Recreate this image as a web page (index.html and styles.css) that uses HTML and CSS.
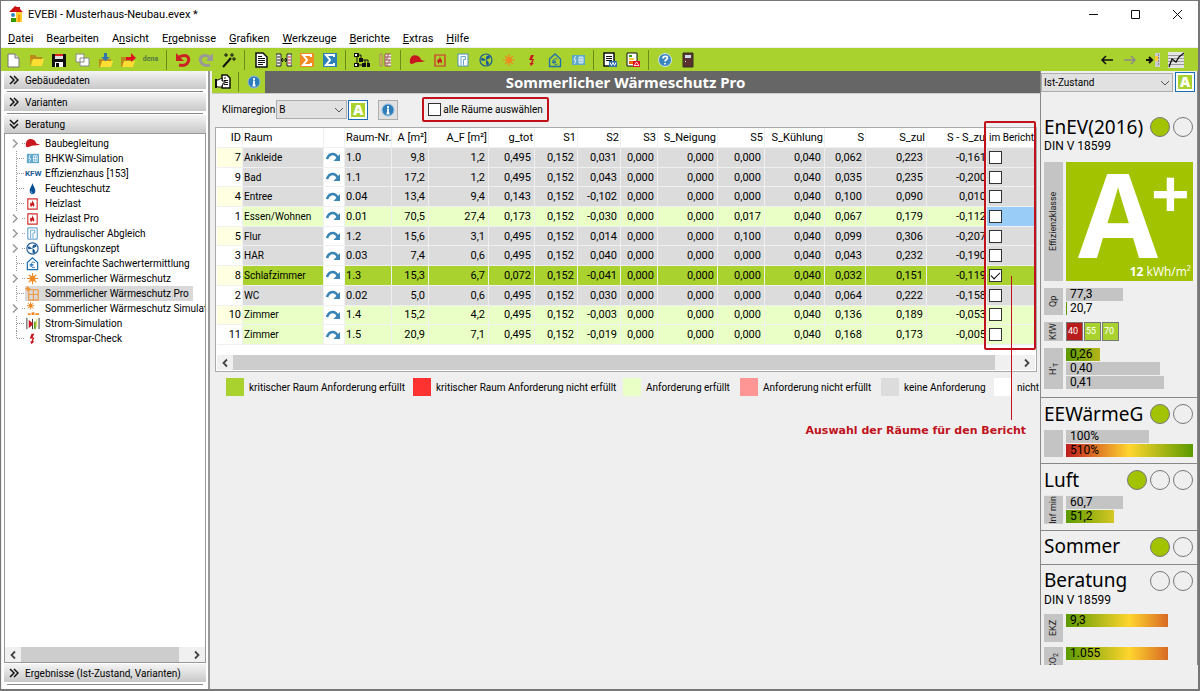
FILE: index.html
```html
<!DOCTYPE html>
<html lang="de">
<head>
    <meta charset="UTF-8">
    <title>EVEBI - Musterhaus-Neubau.evex</title>
    <link rel="stylesheet" href="styles.css">
</head>
<body>
<svg class="sprite" aria-hidden="true">
    <symbol id="i-house" viewBox="0 0 16 16"><path d="M2 6h12v10H2z" fill="#fff"/><path d="M8 6h6v10H8z" fill="#fc3"/><path d="M10 9h2v7h-2z" fill="#f90"/><path d="M3 12h5v4H3z" fill="#390"/><circle cx="5" cy="9" r="2" fill="#38b"/><path d="M1 6l6-6 2 1h3v2l3 3z" fill="#c11"/></symbol>
    <symbol id="i-new" viewBox="0 0 16 16"><path d="M3 2h7l4 4v9H3z" fill="#fff" stroke="#777"/><path d="M10 2v4h4" fill="#ddd" stroke="#777"/></symbol>
    <symbol id="i-open" viewBox="0 0 16 16"><path d="M2 3h5l2 2h5v3H2z" fill="#b98a1c"/><path d="M3 14l2-7h11l-2 7z" fill="#fd3"/><path d="M2 14V6l2 1z" fill="#db8f10"/></symbol>
    <symbol id="i-save" viewBox="0 0 16 16"><path d="M1 2h14v13H1z" fill="#111"/><path d="M4 2h8v5H4z" fill="#ddd"/><path d="M4 2h8v2H4z" fill="#d22"/><path d="M4 10h8v5H4z" fill="#fff"/><path d="M5 11h3v4H5z" fill="#111"/></symbol>
    <symbol id="i-copy" viewBox="0 0 16 16"><path d="M2 2h8v8H2zM6 6h9v8H6z" fill="#fff" stroke="#888"/></symbol>
    <symbol id="i-import" viewBox="0 0 16 16"><path d="M2 7h12v8H2z" fill="#b98a1c"/><path d="M3 15l2-6h11l-2 6z" fill="#fd3"/><path d="M7 1h3v4h3l-4.500 4L4 5h3z" fill="#37a"/></symbol>
    <symbol id="i-export" viewBox="0 0 16 16"><path d="M1 5h12v10H1z" fill="#b98a1c"/><path d="M2 15l2-6h11l-2 6z" fill="#fd3"/><path d="M6 8V5h5V1l5 5-5 4V8z" fill="#d12"/></symbol>
    <symbol id="i-undo" viewBox="0 0 16 16"><path d="M4 5c8-4 11 1 9 5-1 3-5 4-9 3" fill="none" stroke="#c22" stroke-width="3"/><path d="M1 1v8h8z" fill="#c22"/></symbol>
    <symbol id="i-redo" viewBox="0 0 16 16"><path d="M12 5C4 1 1 6 3 10c1 3 5 4 9 3" fill="none" stroke="#999" stroke-width="3"/><path d="M15 1v8H8z" fill="#999"/></symbol>
    <symbol id="i-wand" viewBox="0 0 16 16"><path d="M2 15L10 6" stroke="#111" stroke-width="2"/><path d="M5 1v4M3 3h4M11 1v4M9 3h4M13 5v4M11 7h4" stroke="#111"/></symbol>
    <symbol id="i-doc" viewBox="0 0 16 16"><path d="M3 1h7l4 4v10H3z" fill="#fff" stroke="#111" stroke-width="1.500"/><path d="M5 4.500h4M5 6.500h7M5 8.500h7M5 10.500h7M5 12.500h5" stroke="#111"/></symbol>
    <symbol id="i-compare" viewBox="0 0 16 16"><path d="M0 2h5v12H0V2M11 2h5v12h-5z" fill="#eee" stroke="#222"/><path d="M1 5h3M1 8h3M1 11h3" stroke="#222"/><path d="M12 5h3M12 8h3M12 11h3" stroke="#c22"/><path d="M5 8h6M7 6L5 8l2 2M9 6l2 2-2 2" fill="none" stroke="#111"/></symbol>
    <symbol id="i-sum" viewBox="0 0 16 16"><path d="M1 1h14v14H1z"/><path d="M12 5V3H4l4 5-4 5h8v-2" fill="none" stroke="#fff" stroke-width="2"/></symbol>
    <symbol id="i-tree" viewBox="0 0 16 16"><path d="M3 3h4v5h4v5M3 3v10h5M11 8h3v4" fill="none" stroke="#111"/><path d="M0 1h5v4H0zM5 6h4v4H5zM0 11h5v4H0zM8 11h4v4H8zM13 11h3v4h-3z" fill="#111"/><path d="M1 2h2v2H1zM1 12h2v2H1z" fill="#fff"/></symbol>
    <symbol id="i-wall" viewBox="0 0 16 16"><path d="M3 2h2v12H3z" fill="#fc5" stroke="#986"/><path d="M8 2h6v12H8z" fill="#f4f0ee"/><path d="M8 2v12M8 2h6M8 5h6M8 8h6M8 11h6M8 14h6M11 2v3M10 5v3M12 8v3M10 11v3" stroke="#955"/></symbol>
    <symbol id="i-helmet" viewBox="0 0 16 16"><path d="M1 11C0 4 5 2 9 4c2 1 3 3 3 4l4 1c-2 1-5 1-7 1-3 0-4 2-7 2z" fill="#c8171e"/></symbol>
    <symbol id="i-heat" viewBox="0 0 16 16"><path d="M3 3h10v11H3z" fill="none" stroke="#d22c2c" stroke-width="1.200"/><path d="M8 4c0 3 2 3 2 6l-1 2c0-1 0-2-1-2s-1 1-1 2c-2-1-2-4-1-5l1 1z" fill="#c8171e"/></symbol>
    <symbol id="i-hydro" viewBox="0 0 16 16"><path d="M3 2h10v12H3z" fill="#fff" stroke="#4a90c0"/><path d="M6 4v9M6.500 4.500h4v3h-2V13" fill="none" stroke="#6aa6cf"/></symbol>
    <symbol id="i-fan" viewBox="0 0 16 16"><circle cx="8" cy="8" r="6" fill="none" stroke="#1d5c96" stroke-width="1.200"/><path d="M8 8C2 11 2 5 5 6zM8 8c-1-6 5-5 4-2zM8 8c6 3 1 7 0 4z" fill="#1d5c96"/></symbol>
    <symbol id="i-sun" viewBox="0 0 16 16"><circle cx="8" cy="8" r="3" fill="#f08a24"/><path d="M8 2v12M2 8h12M4 4l8 8M12 4l-8 8" stroke="#f08a24" stroke-width="1.200"/></symbol>
    <symbol id="i-bolt" viewBox="0 0 16 16"><path d="M7 3L5 8h3l-1 3H5.500L7 14l3-3H8.500L10 7H8l2-4z" fill="#c8171e"/></symbol>
    <symbol id="i-value" viewBox="0 0 16 16"><path d="M2.500 7L8 2l5.500 5v7.500h-11z" fill="none" stroke="#1f6fae" stroke-width="1.300"/><path d="M10.500 7C8 5.500 6.500 7.500 6.500 9.500s1.500 4 4 2.500M5 9h4M5 10.500h4" fill="none" stroke="#1f6fae"/></symbol>
    <symbol id="i-bhkw" viewBox="0 0 16 16"><path d="M2 3h13v10H2z" fill="#5fa8ca"/><path d="M5.500 4L4 8h2l-1.500 4M9 5h4v6H9V5M9 8h4M11 5v6" fill="none" stroke="#fff" stroke-width=".8"/></symbol>
    <symbol id="i-word" viewBox="0 0 16 16"><path d="M2 1h10v13H2z" fill="#fff" stroke="#111" stroke-width="1.500"/><path d="M4 4.500h6M4 6.500h6M4 8.500h6" stroke="#111"/><path d="M7 9h8v6H7z" fill="#2c6ca8"/><path d="M8 10.500l1.500 3 1.500-3 1.500 3 1.500-3" fill="none" stroke="#fff"/></symbol>
    <symbol id="i-pdf" viewBox="0 0 16 16"><path d="M2 1h10v13H2z" fill="#fff" stroke="#111"/><path d="M4 3h3v2H4z" fill="#390"/><path d="M4 6h5v2H4z" fill="#fc3"/><path d="M4 9h6v3H4z" fill="#e60"/><path d="M8 9h7v6H8z" fill="#d12"/><path d="M9 14l2.500-4 2.500 3.500H9" fill="none" stroke="#fff" stroke-width=".8"/></symbol>
    <symbol id="i-help" viewBox="0 0 16 16"><circle cx="8" cy="8" r="6.500" fill="#3a85bd" stroke="#d5e6f2"/><path d="M6 6.500c0-3 4.500-2.500 4.500-.5C10.500 7.500 8 7.500 8 9.500M8 11v1.500" fill="none" stroke="#fff" stroke-width="1.700"/></symbol>
    <symbol id="i-info" viewBox="0 0 16 16"><circle cx="8" cy="8" r="6" fill="#2f7db8" stroke="#8dbbe0"/><path d="M7 7.500h1v4M6.500 11.500h3M8 4v2" fill="none" stroke="#fff" stroke-width="1.800"/></symbol>
    <symbol id="i-door" viewBox="0 0 16 16"><path d="M3 1h10v14H3z" fill="#5a3030" stroke="#332"/><path d="M5 3h6v3H5z" fill="#cde"/><path d="M5 9h1v1H5z" fill="#fff"/></symbol>
    <symbol id="i-left" viewBox="0 0 16 16"><path d="M14 8H3M7 4L3 8l4 4" fill="none" stroke="#111" stroke-width="1.500"/></symbol>
    <symbol id="i-right" viewBox="0 0 16 16"><path d="M2 8h11M9 4l4 4-4 4" fill="none" stroke="#8a8a8a" stroke-width="1.500"/></symbol>
    <symbol id="i-dock" viewBox="0 0 16 16"><path d="M1 8h5M4 5l3 3-3 3" fill="none" stroke="#111" stroke-width="2"/><path d="M10 1h5v14h-5z" fill="#ccc"/><path d="M10 4h3v5h-3z" fill="#fc3"/><path d="M13.500 2v12" stroke="#888" stroke-dasharray="2 1"/></symbol>
    <symbol id="i-chart" viewBox="0 0 16 16"><path d="M0 0h16v16H0z" fill="#e4e4e4"/><path d="M0 3.500h16M0 6.500h16M0 9.500h16M0 12.500h16" stroke="#999"/><path d="M1 15L4 7l4 3 3-5 5-4" fill="none" stroke="#111" stroke-width="1.300"/></symbol>
    <symbol id="i-hand" viewBox="0 0 16 16"><path d="M7 1h5l3 3v10H7z" fill="#fff" stroke="#111" stroke-width="1.500"/><path d="M9 4h2M9 6.500h4M9 8.500h4M9 10.500h4" stroke="#111"/><path d="M1 6h2l4-2v3h3v2H8v2H7v2H3l-2-1z" fill="#fff" stroke="#111"/><path d="M0 5h2v9H0z" fill="#111"/></symbol>
    <symbol id="i-drop" viewBox="0 0 16 16"><path d="M8 2c1 4 3 5 3 9 0 4-6 4-6 0 0-4 2-5 3-9z" fill="#0b4f94"/><path d="M6.500 11c0 1 .5 2 1.500 2" fill="none" stroke="#9cf"/></symbol>
    <symbol id="i-window" viewBox="0 0 16 16"><path d="M4 4h10v11H4zM9 4v11M4 9h10" fill="none" stroke="#f0963c" stroke-width="1.200"/><circle cx="3" cy="3" r="2" fill="#f0963c"/><path d="M3 0v6M0 3h6" stroke="#f0963c"/></symbol>
    <symbol id="i-sunbars" viewBox="0 0 16 16"><circle cx="6" cy="5" r="2" fill="#f08a24"/><path d="M6 1v8M2 5h8M3 2l6 6M9 2L3 8" stroke="#f08a24"/><path d="M3 13h3v2H3zM7 12h3v3H7zM11 13h4v2h-4z" fill="#f08a24"/></symbol>
    <symbol id="i-power" viewBox="0 0 16 16"><path d="M2 2v12M8 3v11M15 2v12" stroke="#333"/><path d="M4 4l5 4.500L4 13z" fill="#c8171e"/><path d="M10.500 6v8" stroke="#6a2" stroke-width="2"/><path d="M12.500 3v9" stroke="#cd3"/></symbol>
    <symbol id="i-jump" viewBox="0 0 16 16"><path d="M1 10c2-6 8-7 11-1" fill="none" stroke="#3a85b5" stroke-width="2.600"/><path d="M14 5v7H7.500z" fill="#3a85b5"/></symbol>
    <symbol id="i-more" viewBox="0 0 10 10"><path d="M1 1l4 4-4 4M5 1l4 4-4 4" fill="none" stroke="#111" stroke-width="1.500"/></symbol>
    <symbol id="i-down" viewBox="0 0 10 10"><path d="M1 3l4 4 4-4" fill="none" stroke="#555"/></symbol>
    <symbol id="i-scroll" viewBox="0 0 10 10"><path d="M3 1.500L6.500 5 3 8.500" fill="none" stroke="#444" stroke-width="1.800"/></symbol>
    <symbol id="b-leaf" viewBox="0 0 20 15"><path d="M11.500 0v15" stroke="#999" stroke-dasharray="1 1"/><path d="M12 7.500h8" stroke="#999" stroke-dasharray="1 1"/></symbol>
    <symbol id="b-last" viewBox="0 0 20 15"><path d="M11.500 0v8" stroke="#999" stroke-dasharray="1 1"/><path d="M12 7.500h8" stroke="#999" stroke-dasharray="1 1"/></symbol>
    <symbol id="b-node" viewBox="0 0 20 15"><path d="M8 3.500l4 4-4 4" fill="none" stroke="#999" stroke-width="1.500"/><path d="M17 7.500h3" stroke="#999" stroke-dasharray="1 1"/></symbol>
</svg>

<div class="window">
    <header class="titlebar">
        <svg class="icon"><use href="#i-house"/></svg>
        <span class="caption">EVEBI - Musterhaus-Neubau.evex *</span>
        <button class="winbtn" aria-label="Minimieren"><svg viewBox="0 0 11 11"><path d="M1 5.500h9" stroke="#111"/></svg></button>
        <button class="winbtn" aria-label="Maximieren"><svg viewBox="0 0 11 11"><path d="M1.500 1.500h8v8h-8z" fill="none" stroke="#111"/></svg></button>
        <button class="winbtn" aria-label="Schließen"><svg viewBox="0 0 11 11"><path d="M1 1l9 9M10 1l-9 9" stroke="#111"/></svg></button>
    </header>
    <nav class="menubar">
        <a href="#"><u>D</u>atei</a>
        <a href="#">Be<u>a</u>rbeiten</a>
        <a href="#">A<u>n</u>sicht</a>
        <a href="#">E<u>r</u>gebnisse</a>
        <a href="#"><u>G</u>rafiken</a>
        <a href="#"><u>W</u>erkzeuge</a>
        <a href="#"><u>B</u>erichte</a>
        <a href="#"><u>E</u>xtras</a>
        <a href="#"><u>H</u>ilfe</a>
    </nav>
    <div class="toolbar">
        <button aria-label="Neu"><svg class="icon"><use href="#i-new"/></svg></button>
        <button aria-label="Öffnen"><svg class="icon"><use href="#i-open"/></svg></button>
        <button aria-label="Speichern"><svg class="icon"><use href="#i-save"/></svg></button>
        <button aria-label="Kopieren"><svg class="icon"><use href="#i-copy"/></svg></button>
        <button aria-label="Import"><svg class="icon"><use href="#i-import"/></svg></button>
        <button aria-label="Export"><svg class="icon"><use href="#i-export"/></svg></button>
        <button class="dena">dena</button>
        <span class="sep"></span>
        <button aria-label="Rückgängig"><svg class="icon"><use href="#i-undo"/></svg></button>
        <button aria-label="Wiederholen"><svg class="icon"><use href="#i-redo"/></svg></button>
        <button aria-label="Assistent"><svg class="icon"><use href="#i-wand"/></svg></button>
        <span class="sep"></span>
        <button aria-label="Dokument"><svg class="icon"><use href="#i-doc"/></svg></button>
        <button aria-label="Vergleich"><svg class="icon"><use href="#i-compare"/></svg></button>
        <button aria-label="Summe"><svg class="icon orange"><use href="#i-sum"/></svg></button>
        <button aria-label="Summe Varianten"><svg class="icon blue"><use href="#i-sum"/></svg></button>
        <span class="sep"></span>
        <button aria-label="Anlagenbaum"><svg class="icon"><use href="#i-tree"/></svg></button>
        <button aria-label="Bauteile"><svg class="icon"><use href="#i-wall"/></svg></button>
        <span class="sep"></span>
        <button aria-label="Baubegleitung"><svg class="icon"><use href="#i-helmet"/></svg></button>
        <button aria-label="Heizlast"><svg class="icon"><use href="#i-heat"/></svg></button>
        <button aria-label="Hydraulischer Abgleich"><svg class="icon"><use href="#i-hydro"/></svg></button>
        <button aria-label="Lüftungskonzept"><svg class="icon"><use href="#i-fan"/></svg></button>
        <button aria-label="Wärmeschutz"><svg class="icon"><use href="#i-sun"/></svg></button>
        <button aria-label="Stromspar-Check"><svg class="icon"><use href="#i-bolt"/></svg></button>
        <button aria-label="Sachwert"><svg class="icon"><use href="#i-value"/></svg></button>
        <button aria-label="BHKW"><svg class="icon"><use href="#i-bhkw"/></svg></button>
        <span class="sep"></span>
        <button aria-label="Word-Bericht"><svg class="icon"><use href="#i-word"/></svg></button>
        <button aria-label="PDF-Bericht"><svg class="icon"><use href="#i-pdf"/></svg></button>
        <span class="sep"></span>
        <button aria-label="Hilfe"><svg class="icon"><use href="#i-help"/></svg></button>
        <button aria-label="Beenden"><svg class="icon"><use href="#i-door"/></svg></button>
        <span class="spacer"></span>
        <button aria-label="Zurück"><svg class="icon"><use href="#i-left"/></svg></button>
        <button aria-label="Vor"><svg class="icon"><use href="#i-right"/></svg></button>
        <button aria-label="Andocken"><svg class="icon"><use href="#i-dock"/></svg></button>
        <button aria-label="Diagramm"><svg class="icon"><use href="#i-chart"/></svg></button>
    </div>

    <div class="body">
        <aside class="sidebar">
            <button class="fold"><svg><use href="#i-more"/></svg>Gebäudedaten</button>
            <hr>
            <button class="fold"><svg><use href="#i-more"/></svg>Varianten</button>
            <hr>
            <button class="fold open"><svg><use href="#i-more"/></svg>Beratung</button>
            <div class="treebox">
                <ul class="tree">
                    <li><svg class="branch"><use href="#b-node"/></svg><a href="#"><svg class="icon"><use href="#i-helmet"/></svg>Baubegleitung</a></li>
                    <li><svg class="branch"><use href="#b-leaf"/></svg><a href="#"><svg class="icon"><use href="#i-bhkw"/></svg>BHKW-Simulation</a></li>
                    <li><svg class="branch"><use href="#b-leaf"/></svg><a href="#"><span class="kfw-logo">KFW</span>Effizienzhaus [153]</a></li>
                    <li><svg class="branch"><use href="#b-leaf"/></svg><a href="#"><svg class="icon"><use href="#i-drop"/></svg>Feuchteschutz</a></li>
                    <li><svg class="branch"><use href="#b-leaf"/></svg><a href="#"><svg class="icon"><use href="#i-heat"/></svg>Heizlast</a></li>
                    <li><svg class="branch"><use href="#b-node"/></svg><a href="#"><svg class="icon"><use href="#i-heat"/></svg>Heizlast Pro</a></li>
                    <li><svg class="branch"><use href="#b-node"/></svg><a href="#"><svg class="icon"><use href="#i-hydro"/></svg>hydraulischer Abgleich</a></li>
                    <li><svg class="branch"><use href="#b-node"/></svg><a href="#"><svg class="icon"><use href="#i-fan"/></svg>Lüftungskonzept</a></li>
                    <li><svg class="branch"><use href="#b-leaf"/></svg><a href="#"><svg class="icon"><use href="#i-value"/></svg>vereinfachte Sachwertermittlung</a></li>
                    <li><svg class="branch"><use href="#b-node"/></svg><a href="#"><svg class="icon"><use href="#i-sun"/></svg>Sommerlicher Wärmeschutz</a></li>
                    <li><svg class="branch"><use href="#b-leaf"/></svg><a href="#" class="selected"><svg class="icon"><use href="#i-window"/></svg>Sommerlicher Wärmeschutz Pro</a></li>
                    <li><svg class="branch"><use href="#b-node"/></svg><a href="#"><svg class="icon"><use href="#i-sunbars"/></svg>Sommerlicher Wärmeschutz Simulation</a></li>
                    <li><svg class="branch"><use href="#b-leaf"/></svg><a href="#"><svg class="icon"><use href="#i-power"/></svg>Strom-Simulation</a></li>
                    <li><svg class="branch"><use href="#b-last"/></svg><a href="#"><svg class="icon"><use href="#i-bolt"/></svg>Stromspar-Check</a></li>
                </ul>
                <div class="hscroll">
                    <svg class="back"><use href="#i-scroll"/></svg>
                    <div class="track"><div class="thumb" style="width: 94%"></div></div>
                    <svg><use href="#i-scroll"/></svg>
                </div>
            </div>
            <button class="fold"><svg><use href="#i-more"/></svg>Ergebnisse (Ist-Zustand, Varianten)</button>
            <hr>
        </aside>

        <main class="content">
            <div class="pagehead">
                <button aria-label="Bericht"><svg class="icon"><use href="#i-hand"/></svg></button>
                <span class="sep"></span>
                <button aria-label="Info"><svg class="icon"><use href="#i-info"/></svg></button>
                <h1>Sommerlicher Wärmeschutz Pro</h1>
            </div>
            <div class="filter">
                <label for="region">Klimaregion</label>
                <span class="combo region"><select id="region"><option>B</option></select><svg><use href="#i-down"/></svg></span>
                <button class="auto">A</button>
                <button class="infobtn" aria-label="Info"><svg class="icon"><use href="#i-info"/></svg></button>
                <label class="all"><input type="checkbox">alle Räume auswählen</label>
            </div>

            <div class="grid">
                <table>
                    <colgroup>
                        <col class="w26"><col class="w81"><col class="w21"><col class="w47"><col class="w37"><col class="w60"><col class="w46"><col class="w43"><col class="w43"><col class="w37"><col class="w60"><col class="w47"><col class="w60"><col class="w41"><col class="w61"><col class="w60"><col class="w49">
                    </colgroup>
                    <thead>
                    <tr><th>ID</th><th class="l">Raum</th><th></th><th class="l">Raum-Nr.</th><th>A [m²]</th><th>A_F [m²]</th><th>g_tot</th><th>S1</th><th>S2</th><th>S3</th><th>S_Neigung</th><th>S5</th><th>S_Kühlung</th><th>S</th><th>S_zul</th><th class="cut">S - S_zul</th><th class="l">im Bericht</th></tr>
                    </thead>
                    <tbody>
                    <tr class="none"><td>7</td><td class="l">Ankleide</td><td class="go"><svg class="icon"><use href="#i-jump"/></svg></td><td class="l">1.0</td><td>9,8</td><td>1,2</td><td>0,495</td><td>0,152</td><td>0,031</td><td>0,000</td><td>0,000</td><td>0,000</td><td>0,040</td><td>0,062</td><td>0,223</td><td class="end">-0,161</td><td class="l"><input type="checkbox" aria-label="Ankleide"></td></tr>
                    <tr class="none"><td>9</td><td class="l">Bad</td><td class="go"><svg class="icon"><use href="#i-jump"/></svg></td><td class="l">1.1</td><td>17,2</td><td>1,2</td><td>0,495</td><td>0,152</td><td>0,043</td><td>0,000</td><td>0,000</td><td>0,000</td><td>0,040</td><td>0,035</td><td>0,235</td><td class="end">-0,200</td><td class="l"><input type="checkbox" aria-label="Bad"></td></tr>
                    <tr class="none"><td>4</td><td class="l">Entree</td><td class="go"><svg class="icon"><use href="#i-jump"/></svg></td><td class="l">0.04</td><td>13,4</td><td>9,4</td><td>0,143</td><td>0,152</td><td>-0,102</td><td>0,000</td><td>0,000</td><td>0,000</td><td>0,040</td><td>0,100</td><td>0,090</td><td class="end">0,010</td><td class="l"><input type="checkbox" aria-label="Entree"></td></tr>
                    <tr class="ok"><td>1</td><td class="l">Essen/Wohnen</td><td class="go"><svg class="icon"><use href="#i-jump"/></svg></td><td class="l">0.01</td><td>70,5</td><td>27,4</td><td>0,173</td><td>0,152</td><td>-0,030</td><td>0,000</td><td>0,000</td><td>0,017</td><td>0,040</td><td>0,067</td><td>0,179</td><td class="end">-0,112</td><td class="l focus"><input type="checkbox" aria-label="Essen/Wohnen"></td></tr>
                    <tr class="none"><td>5</td><td class="l">Flur</td><td class="go"><svg class="icon"><use href="#i-jump"/></svg></td><td class="l">1.2</td><td>15,6</td><td>3,1</td><td>0,495</td><td>0,152</td><td>0,014</td><td>0,000</td><td>0,000</td><td>0,100</td><td>0,040</td><td>0,099</td><td>0,306</td><td class="end">-0,207</td><td class="l"><input type="checkbox" aria-label="Flur"></td></tr>
                    <tr class="none"><td>3</td><td class="l">HAR</td><td class="go"><svg class="icon"><use href="#i-jump"/></svg></td><td class="l">0.03</td><td>7,4</td><td>0,6</td><td>0,495</td><td>0,152</td><td>0,040</td><td>0,000</td><td>0,000</td><td>0,000</td><td>0,040</td><td>0,043</td><td>0,232</td><td class="end">-0,190</td><td class="l"><input type="checkbox" aria-label="HAR"></td></tr>
                    <tr class="critical"><td>8</td><td class="l">Schlafzimmer</td><td class="go"><svg class="icon"><use href="#i-jump"/></svg></td><td class="l">1.3</td><td>15,3</td><td>6,7</td><td>0,072</td><td>0,152</td><td>-0,041</td><td>0,000</td><td>0,000</td><td>0,000</td><td>0,040</td><td>0,032</td><td>0,151</td><td class="end">-0,119</td><td class="l"><input type="checkbox" aria-label="Schlafzimmer" checked></td></tr>
                    <tr class="none"><td>2</td><td class="l">WC</td><td class="go"><svg class="icon"><use href="#i-jump"/></svg></td><td class="l">0.02</td><td>5,0</td><td>0,6</td><td>0,495</td><td>0,152</td><td>0,030</td><td>0,000</td><td>0,000</td><td>0,000</td><td>0,040</td><td>0,064</td><td>0,222</td><td class="end">-0,158</td><td class="l"><input type="checkbox" aria-label="WC"></td></tr>
                    <tr class="ok"><td>10</td><td class="l">Zimmer</td><td class="go"><svg class="icon"><use href="#i-jump"/></svg></td><td class="l">1.4</td><td>15,2</td><td>4,2</td><td>0,495</td><td>0,152</td><td>-0,003</td><td>0,000</td><td>0,000</td><td>0,000</td><td>0,040</td><td>0,136</td><td>0,189</td><td class="end">-0,053</td><td class="l"><input type="checkbox" aria-label="Zimmer 1.4"></td></tr>
                    <tr class="ok"><td>11</td><td class="l">Zimmer</td><td class="go"><svg class="icon"><use href="#i-jump"/></svg></td><td class="l">1.5</td><td>20,9</td><td>7,1</td><td>0,495</td><td>0,152</td><td>-0,019</td><td>0,000</td><td>0,000</td><td>0,000</td><td>0,040</td><td>0,168</td><td>0,173</td><td class="end">-0,005</td><td class="l"><input type="checkbox" aria-label="Zimmer 1.5"></td></tr>
                    </tbody>
                </table>
                <div class="hscroll">
                    <svg class="back"><use href="#i-scroll"/></svg>
                    <div class="track"><div class="thumb" style="width: 97%"></div></div>
                    <svg><use href="#i-scroll"/></svg>
                </div>
                <!-- red markers over the report column -->
                <div class="mark"></div>
                <div class="pointer"></div>
                <p class="note">Auswahl der Räume für den Bericht</p>
            </div>

            <ul class="legend">
                <li><i class="critical"></i>kritischer Raum Anforderung erfüllt</li>
                <li><i class="fail"></i>kritischer Raum Anforderung nicht erfüllt</li>
                <li><i class="ok"></i>Anforderung erfüllt</li>
                <li><i class="notok"></i>Anforderung nicht erfüllt</li>
                <li><i class="none"></i>keine Anforderung</li>
                <li><i class="blank"></i>nicht</li>
            </ul>
        </main>

        <aside class="rating">
            <div class="state">
                <span class="combo"><select aria-label="Zustand"><option>Ist-Zustand</option></select><svg><use href="#i-down"/></svg></span>
                <button class="auto">A</button>
            </div>
            <section class="enev">
                <h2>EnEV(2016)<b class="lamp on"></b><b class="lamp"></b></h2>
                <p>DIN V 18599</p>
                <div class="row">
                    <span class="side">Effizienzklasse</span>
                    <div class="klasse">
                        <span class="letter">A</span><span class="plus">+</span>
                        <span class="value"><b>12</b> kWh/m²</span>
                    </div>
                </div>
                <div class="row">
                    <span class="side">Qp</span>
                    <div class="bars">
                        <div class="bar" style="width: 45%">77,3</div>
                        <div class="bar tiny">20,7</div>
                    </div>
                </div>
                <div class="row">
                    <span class="side">KfW</span>
                    <div class="kfw"><span class="bad">40</span><span>55</span><span>70</span></div>
                </div>
                <div class="row">
                    <span class="side"><span>H'<sub>T</sub></span></span>
                    <div class="bars">
                        <div class="bar green" style="width: 27%">0,26</div>
                        <div class="bar" style="width: 74%">0,40</div>
                        <div class="bar" style="width: 77%">0,41</div>
                    </div>
                </div>
            </section>
            <section>
                <h2>EEWärmeG<b class="lamp on"></b><b class="lamp"></b></h2>
                <div class="row">
                    <span class="side"></span>
                    <div class="bars">
                        <div class="bar" style="width: 65%">100%</div>
                        <div class="bar redgreen">510%</div>
                    </div>
                </div>
            </section>
            <section>
                <h2>Luft<b class="lamp on"></b><b class="lamp"></b><b class="lamp"></b></h2>
                <div class="row">
                    <span class="side">Inf min</span>
                    <div class="bars">
                        <div class="bar" style="width: 45%">60,7</div>
                        <div class="bar greenyellow" style="width: 38%">51,2</div>
                    </div>
                </div>
            </section>
            <section>
                <h2>Sommer<b class="lamp on"></b><b class="lamp"></b></h2>
            </section>
            <section class="advice">
                <h2>Beratung<b class="lamp"></b><b class="lamp"></b></h2>
                <p>DIN V 18599</p>
                <div class="row">
                    <span class="side">EKZ</span>
                    <div class="bars">
                        <div class="bar greenred" style="width: 80%">9,3</div>
                    </div>
                </div>
                <div class="row">
                    <span class="side"><span>CO<sub>2</sub></span></span>
                    <div class="bars">
                        <div class="bar greenred" style="width: 80%">1.055</div>
                    </div>
                </div>
            </section>
        </aside>
    </div>
</div>
</body>
</html>
```
FILE: styles.css
```css
* {
    box-sizing: border-box;
}

body {
    margin: 0;
    font-family: Roboto, "Liberation Sans", sans-serif;
    font-size: 10px;
    line-height: 15px;
    color: #000;
    background-color: #efefef;
}

h1, h2, p, ul {
    margin: 0;
    padding: 0;
    font-weight: normal;
}

ul {
    list-style: none;
}

a {
    color: inherit;
    text-decoration: none;
}

button, select {
    font: inherit;
    color: inherit;
    padding: 0;
    border: 0;
    background: none;
}

.sprite {
    display: none;
}

.icon {
    width: 16px;
    height: 16px;
    flex: none;
    display: block;
}

.orange {
    fill: #f08a24;
}

.blue {
    fill: #2f7fb8;
}

.window {
    display: flex;
    flex-direction: column;
    height: 100vh;
    border: 1px solid #777;
    border-right-width: 2px;
    border-bottom-width: 2px;
}

/* title and menu */

.titlebar {
    display: flex;
    align-items: center;
    height: 26px;
    padding-left: 7px;
    font-size: 11px;
    background-color: #fff;
}

.caption {
    flex: 1;
    margin-left: 4px;
}

.winbtn {
    width: 42px;
    height: 26px;
}

.winbtn svg {
    width: 11px;
    height: 11px;
    vertical-align: middle;
}

.menubar {
    display: flex;
    gap: 13px;
    height: 20px;
    padding: 4px 7px 0;
    font-size: 11px;
    background-color: #fff;
}

.toolbar {
    display: flex;
    align-items: center;
    height: 23px;
    margin-top: 1px;
    padding-right: 11px;
    background-color: #a9d22f;
}

.toolbar button {
    display: flex;
    justify-content: center;
    align-items: center;
    width: 23px;
    height: 22px;
}

.toolbar .dena {
    font-size: 7px;
    font-weight: bold;
    color: #574;
}

.sep {
    width: 1px;
    height: 20px;
    margin: 0 4px;
    background-color: #6d8b18;
}

.spacer {
    flex: 1;
}

.body {
    display: flex;
    flex: 1;
    min-height: 0;
}

/* navigation */

.sidebar {
    display: flex;
    flex-direction: column;
    flex: none;
    width: 208px;
    margin-left: 1px;
    padding: 0 2px 3px;
    border-right: 2px solid #999;
    background-color: #fff;
}

.fold {
    display: flex;
    align-items: center;
    flex: none;
    height: 18px;
    padding-left: 5px;
    background: linear-gradient(#f4f4f4, #c8c8c8);
}

.fold svg {
    width: 10px;
    height: 10px;
    margin-right: 6px;
}

.open svg {
    transform: rotate(90deg);
}

.sidebar hr {
    width: 196px;
    margin: 2px auto 1px;
    border: 0;
    border-top: 1px solid #888;
}

.treebox {
    display: flex;
    flex-direction: column;
    flex: 1;
    min-height: 0;
    margin-bottom: 1px;
    border: 1px solid #999;
}

.tree {
    flex: 1;
    padding-top: 2px;
    overflow: hidden;
}

.tree li {
    display: flex;
    height: 15px;
    white-space: nowrap;
}

.branch {
    flex: none;
    width: 20px;
    height: 15px;
}

.tree a {
    display: flex;
    align-items: center;
    padding-right: 4px;
}

.tree .icon {
    width: 15px;
    height: 15px;
    margin-right: 5px;
}

.kfw-logo {
    width: 20px;
    font-size: 8px;
    font-weight: bold;
    color: #1d5c96;
}

.selected {
    background-color: #d9d9d9;
}

.hscroll {
    display: flex;
    align-items: center;
    flex: none;
    height: 15px;
    background-color: #f0f0f0;
}

.hscroll svg {
    flex: none;
    width: 10px;
    height: 10px;
    margin: 0 3px;
}

.hscroll .back {
    transform: rotate(180deg);
}

.track {
    flex: 1;
    height: 100%;
}

.thumb {
    height: 100%;
    background-color: #cdcdcd;
}

/* room table */

.content {
    flex: 1;
    min-width: 0;
    margin-left: 2px;
    overflow: hidden;
}

.pagehead {
    display: flex;
    align-items: center;
    height: 22px;
    background-color: #a9d22f;
}

.pagehead button {
    display: flex;
    justify-content: center;
    width: 22px;
}

.pagehead .sep {
    flex: none;
}

.pagehead h1 {
    flex: 1;
    padding-right: 54px;
    font-family: "Noto Sans", sans-serif;
    font-size: 15px;
    line-height: 22px;
    font-weight: bold;
    text-align: center;
    color: #fff;
    background-color: #666;
}

.filter {
    display: flex;
    align-items: center;
    height: 32px;
    margin-bottom: 2px;
    padding-left: 10px;
    border-top: 1px solid #ccc;
}

.combo {
    position: relative;
    display: inline-flex;
    height: 19px;
}

.combo select {
    flex: 1;
    padding: 0 16px 0 2px;
    appearance: none;
    border: 1px solid #adadad;
    border-radius: 0;
    background-color: #e1e1e1;
}

.combo svg {
    position: absolute;
    right: 3px;
    top: 5px;
    width: 10px;
    height: 10px;
    pointer-events: none;
}

.region {
    width: 71px;
    margin: 0 1px;
}

.auto {
    width: 20px;
    height: 20px;
    font-family: "Open Sans", sans-serif;
    font-size: 14px;
    line-height: 14px;
    font-weight: 800;
    color: #fff;
    border: 1px solid #1a6fb4;
    box-shadow: inset 0 0 0 2px #fff;
    background-color: #a9d22f;
}

.infobtn {
    padding: 1px;
    margin: 0 24px 0 10px;
    border: 1px solid #adadad;
    background-color: #e1e1e1;
}

.all {
    display: flex;
    align-items: center;
    height: 25px;
    padding: 0 4px;
    border: 2px solid #c1121c;
    border-radius: 2px;
}

input[type="checkbox"] {
    flex: none;
    display: block;
    width: 13px;
    height: 13px;
    margin: 0;
    appearance: none;
    border: 1px solid #333;
    background-color: #fff;
}

.all input {
    margin-right: 2px;
}

input[type="checkbox"]:checked::before {
    content: "";
    display: block;
    width: 8px;
    height: 4px;
    margin: 2px 1px;
    border-left: 1px solid #000;
    border-bottom: 1px solid #000;
    transform: rotate(-45deg);
}

.grid {
    position: relative;
    height: 245px;
    margin: 0 3px;
    padding: 0 1px 1px;
    display: flex;
    flex-direction: column;
    justify-content: space-between;
    border: 1px solid #aaa;
    background-color: #fff;
}

table {
    width: 100%;
    height: 217px;
    table-layout: fixed;
    border-spacing: 0;
    font-size: 11px;
}

.w21 { width: 21px; }
.w26 { width: 26px; }
.w37 { width: 37px; }
.w41 { width: 41px; }
.w43 { width: 43px; }
.w46 { width: 46px; }
.w47 { width: 47px; }
.w49 { width: 49px; }
.w60 { width: 60px; }
.w61 { width: 61px; }
.w81 { width: 81px; }

th, td {
    padding: 0 3px 0 0;
    font-weight: normal;
    text-align: right;
    white-space: nowrap;
    border-right: 1px solid #f0f0f0;
    border-bottom: 1px solid #f0f0f0;
}

th {
    height: 20px;
    padding-right: 1px;
}

td:nth-child(2), th:last-child {
    font-size: 10px;
}

.l {
    padding: 0 0 0 1px;
    text-align: left;
}

.l:last-child {
    padding-left: 2px;
}

.cut {
    padding-left: 20px;
    text-align: left;
    overflow: hidden;
}

.end {
    padding-right: 0;
}

.go {
    padding: 0 2px;
    background-color: #fff;
}

tbody td:first-child {
    padding-right: 1px;
    background-color: #fff;
}

tbody tr:nth-child(odd) td:first-child {
    background-color: #ffffe1;
}

.none {
    background-color: #dcdcdc;
}

.ok {
    background-color: #e9ffc6;
}

.critical {
    background-color: #a9d22f;
}

.fail {
    background-color: #ff3232;
}

.notok {
    background-color: #ff9696;
}

.blank {
    background-color: #fff;
}

.focus {
    background-color: #99cdf7;
}

.mark {
    position: absolute;
    top: -7px;
    right: 0;
    width: 52px;
    height: 229px;
    border: 2px solid #c1121c;
    border-radius: 2px;
    pointer-events: none;
}

.pointer {
    position: absolute;
    top: 148px;
    right: 24px;
    width: 1px;
    height: 144px;
    background-color: #c1121c;
}

.note {
    position: absolute;
    top: 295px;
    right: 10px;
    font-family: "DejaVu Sans", sans-serif;
    font-size: 11px;
    font-weight: bold;
    white-space: nowrap;
    color: #c1121c;
}

.legend {
    display: grid;
    grid-template-columns: 187px 210px 117px 141px 113px 60px;
    margin: 6px 0 0 14px;
}

.legend li {
    display: flex;
    align-items: center;
    white-space: nowrap;
}

.legend i {
    flex: none;
    width: 18px;
    height: 18px;
    margin-right: 5px;
}

/* rating column */

.rating {
    flex: none;
    width: 158px;
    margin-bottom: 24px;
    overflow: hidden;
    border-left: 1px solid #888;
    border-right: 1px solid #888;
}

.state {
    display: flex;
    align-items: center;
    gap: 2px;
    height: 22px;
    padding-right: 2px;
}

.state .combo {
    flex: 1;
}

.rating section {
    padding: 5px 4px 6px 3px;
    border-bottom: 1px solid #888;
}

.rating .enev {
    padding-top: 23px;
    padding-bottom: 8px;
}

.rating .advice {
    border-bottom: 0;
}

.rating h2 {
    display: flex;
    align-items: center;
    gap: 3px;
    height: 22px;
    font-family: "Noto Sans", sans-serif;
    font-size: 19px;
}

.lamp {
    width: 20px;
    height: 20px;
    border: 1px solid #777;
    border-radius: 50%;
}

.lamp:first-of-type {
    margin-left: auto;
}

.on {
    background-color: #a2c400;
}

.rating p {
    font-size: 12px;
    line-height: 17px;
}

.row {
    display: flex;
    gap: 3px;
    margin-top: 7px;
}

h2 + .row, .advice .row {
    margin-top: 5px;
}

.side {
    display: flex;
    justify-content: center;
    align-items: center;
    width: 19px;
    font-size: 9px;
    white-space: nowrap;
    writing-mode: vertical-rl;
    transform: rotate(180deg);
    color: #222;
    background-color: #c4c4c4;
}

.advice .side {
    min-height: 28px;
}

sub {
    font-size: 7px;
    line-height: 7px;
}

.klasse {
    position: relative;
    flex: 1;
    height: 119px;
    font-family: "Open Sans", sans-serif;
    color: #fff;
    background-color: #a2c400;
}

.letter, .plus {
    position: absolute;
    font-weight: bold;
}

.letter {
    left: 12px;
    top: 0;
    font-size: 116px;
    line-height: 102px;
}

.plus {
    right: 3px;
    top: 0;
    font-size: 68px;
    line-height: 62px;
}

.value {
    position: absolute;
    right: 2px;
    bottom: 2px;
    font-size: 12px;
}

.bars {
    flex: 1;
    display: grid;
    gap: 1px;
    align-content: start;
}

.bar {
    height: 13px;
    padding-left: 4px;
    font-size: 12px;
    line-height: 13px;
    background-color: #c4c4c4;
}

.tiny {
    padding-left: 3px;
    border-left: 1px solid #5a9a00;
    background: none;
}

.green {
    background: linear-gradient(90deg, #5a9a00, #b4b41c);
}

.greenyellow {
    background: linear-gradient(90deg, #5a9a00, #d6c824);
}

.greenred {
    background: linear-gradient(90deg, #5a9a00, #ffd52e 62%, #d86a24);
}

.redgreen {
    background: linear-gradient(90deg, #be1e1e, #ffd52e 50%, #5a9a00);
}

.kfw {
    display: flex;
    gap: 1px;
}

.kfw span {
    width: 17px;
    height: 19px;
    padding-left: 1px;
    font-size: 9px;
    line-height: 17px;
    color: #fff;
    border: 1px solid #777;
    background-color: #a9d22f;
}

.kfw .bad {
    background-color: #b81c1c;
}
```
